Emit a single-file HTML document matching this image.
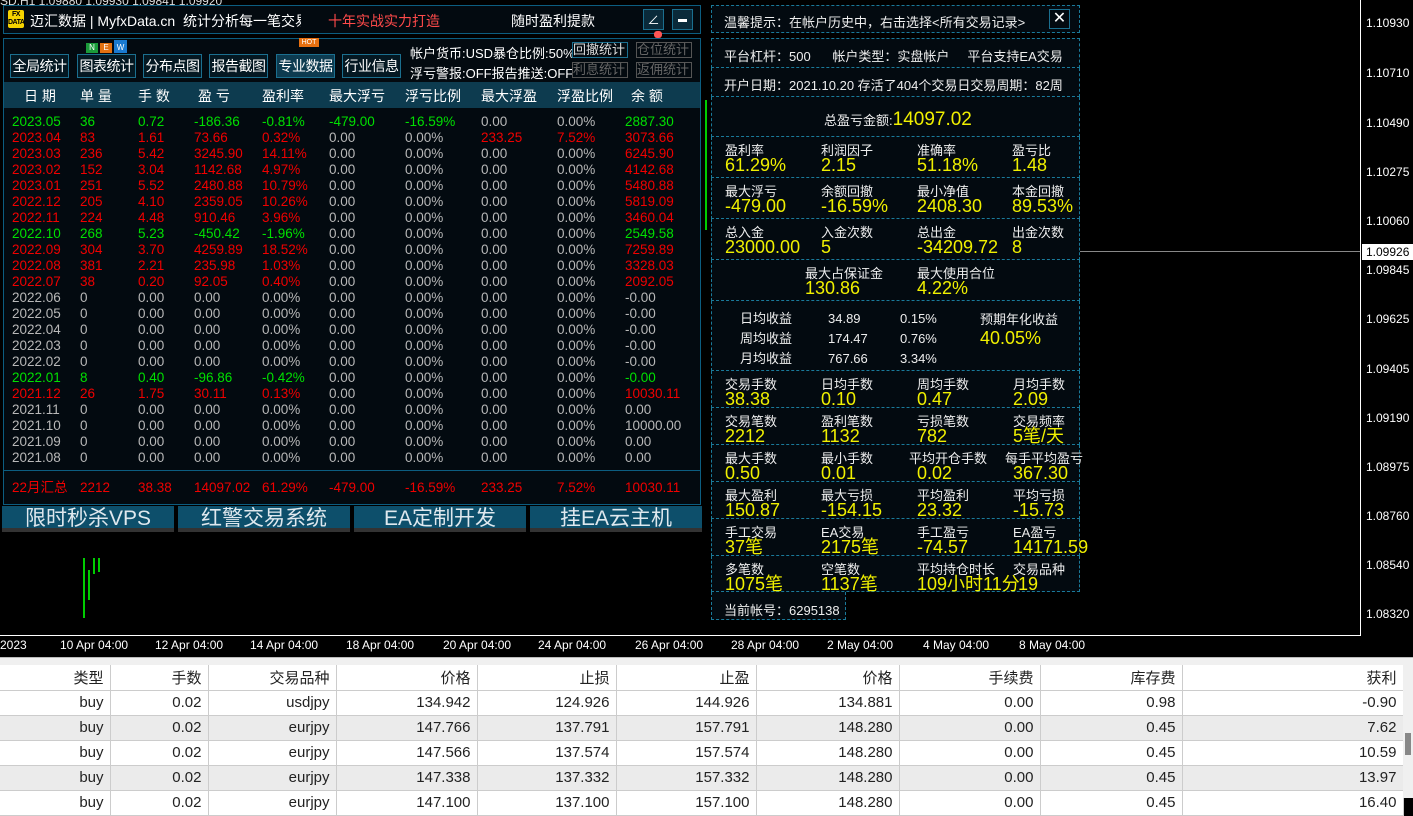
<!DOCTYPE html>
<html><head><meta charset="utf-8"><style>
*{margin:0;padding:0;box-sizing:border-box}
body{width:1413px;height:798px;background:#000;position:relative;overflow:hidden;font-family:"Liberation Sans","Noto Sans CJK SC",sans-serif;color:#ddd}
.a{position:absolute;white-space:nowrap}
.box{position:absolute;border:1px solid #0c5d80;background:#030a10}
.btn{position:absolute;top:54px;height:24px;border:1px solid #1b6f8f;background:#041822;color:#fff;font-size:14px;line-height:22px;text-align:center;white-space:nowrap;overflow:visible;letter-spacing:-0.5px}
table.d{position:absolute;left:12px;border-collapse:collapse;font-size:13.5px;table-layout:fixed}
table.d td{height:16px;line-height:16px;padding:0;white-space:nowrap;overflow:visible}
.g{color:#00e000}.r{color:#f00000}.z{color:#b8b8b8}
.rp{position:absolute;left:711px;width:369px;border:1px dashed #1a7a9a;border-top:none;background:#030a10}
.l{font-size:13px;color:#eee}
.y{color:#f0f000;font-size:18px}
.cell{position:absolute;line-height:15px}
.bb{position:absolute;top:506px;height:26px;background:#0d4f6b;color:#dfe8ee;font-size:21px;line-height:26px;text-align:center;border-bottom:4px solid #333}
.px{position:absolute;left:1366px;font-size:12px;color:#fff}
.tx{position:absolute;top:638px;font-size:12px;color:#fff}
table.b{position:absolute;left:0;top:665px;border-collapse:collapse;font-size:15px;color:#222;table-layout:fixed;background:#fff}
table.b td{height:25px;text-align:right;padding-right:6px;border-right:1px solid #ccc;border-bottom:1px solid #ccc;white-space:nowrap}
table.b tr:nth-child(odd) td{background:#ebebeb}
table.b tr:first-child td{background:#fff}
</style></head><body>

<div class="a" style="left:0;top:-6px;font-size:12px;color:#ddd">SD,H1 1.09880 1.09930 1.09841 1.09920</div>
<div class="a" style="left:1360px;top:0;width:1px;height:636px;background:#fff"></div>
<div class="a" style="left:0;top:635px;width:1361px;height:1px;background:#fff"></div>
<div class="a" style="left:1080px;top:251px;width:280px;height:1px;background:#888"></div>
<div class="px" style="top:16px">1.10930</div>
<div class="px" style="top:66px">1.10710</div>
<div class="px" style="top:116px">1.10490</div>
<div class="px" style="top:165px">1.10275</div>
<div class="px" style="top:214px">1.10060</div>
<div class="a" style="left:1362px;top:244px;width:51px;height:16px;background:#fff;color:#000;font-size:12px;padding-left:4px;line-height:16px">1.09926</div>
<div class="px" style="top:263px">1.09845</div>
<div class="px" style="top:312px">1.09625</div>
<div class="px" style="top:362px">1.09405</div>
<div class="px" style="top:411px">1.09190</div>
<div class="px" style="top:460px">1.08975</div>
<div class="px" style="top:509px">1.08760</div>
<div class="px" style="top:558px">1.08540</div>
<div class="px" style="top:607px">1.08320</div>
<div class="tx" style="left:0">2023</div>
<div class="tx" style="left:60px">10 Apr 04:00</div>
<div class="tx" style="left:155px">12 Apr 04:00</div>
<div class="tx" style="left:250px">14 Apr 04:00</div>
<div class="tx" style="left:346px">18 Apr 04:00</div>
<div class="tx" style="left:443px">20 Apr 04:00</div>
<div class="tx" style="left:538px">24 Apr 04:00</div>
<div class="tx" style="left:635px">26 Apr 04:00</div>
<div class="tx" style="left:731px">28 Apr 04:00</div>
<div class="tx" style="left:827px">2 May 04:00</div>
<div class="tx" style="left:923px">4 May 04:00</div>
<div class="tx" style="left:1019px">8 May 04:00</div>
<div class="a" style="left:83px;top:558px;width:2px;height:60px;background:#0c0"></div>
<div class="a" style="left:88px;top:570px;width:2px;height:30px;background:#0c0"></div>
<div class="a" style="left:93px;top:558px;width:2px;height:16px;background:#0c0"></div>
<div class="a" style="left:98px;top:558px;width:2px;height:14px;background:#0c0"></div>
<div class="a" style="left:705px;top:100px;width:2px;height:130px;background:#0c0"></div>

<!-- header -->
<div class="box" style="left:3px;top:5px;width:698px;height:29px"></div>
<div class="a" style="left:8px;top:10px;width:16px;height:18px;background:#f5d400;color:#000;font-size:7px;font-weight:bold;line-height:8px;text-align:center;padding-top:1px;border-radius:2px;letter-spacing:-0.5px">FX<br>DATA</div>
<div class="a" style="left:30px;top:11px;font-size:14px;color:#fff">迈汇数据 | MyfxData.cn&nbsp; 统计分析每一笔交易</div>
<div class="a" style="left:301px;top:9px;width:24px;height:22px;background:#030a10"></div>
<div class="a" style="left:328px;top:11px;font-size:14px;color:#ff4a4a">十年实战实力打造</div>
<div class="a" style="left:511px;top:11px;font-size:14px;color:#fff">随时盈利提款</div>
<div class="a" style="left:643px;top:9px;width:21px;height:21px;border:1px solid #1b6f8f;background:#0a2a3a;color:#fff;font-size:12px;text-align:center;line-height:20px">∠</div>
<div class="a" style="left:672px;top:9px;width:21px;height:21px;border:1px solid #1b6f8f;background:#0a2a3a"><div style="margin:9px 5px 0;height:3px;background:#fff"></div></div>
<div class="a" style="left:654px;top:31px;width:8px;height:7px;background:#f55;border-radius:3px"></div>

<!-- left panel -->
<div class="box" style="left:3px;top:38px;width:698px;height:467px"></div>
<div class="a" style="left:86px;top:43px;width:12px;height:10px;background:#1a9a3a;font-size:8px;color:#fff;text-align:center">N</div>
<div class="a" style="left:100px;top:43px;width:12px;height:10px;background:#e07010;font-size:8px;color:#fff;text-align:center">E</div>
<div class="a" style="left:114px;top:40px;width:13px;height:13px;background:#1a7ad0;font-size:8px;color:#fff;text-align:center;line-height:16px">W</div>
<div class="a" style="left:299px;top:38px;width:20px;height:9px;background:#e87010;font-size:7px;color:#fff;text-align:center;line-height:9px">HOT</div>
<div class="btn" style="left:10px;width:59px">全局统计</div>
<div class="btn" style="left:77px;width:59px">图表统计</div>
<div class="btn" style="left:143px;width:59px">分布点图</div>
<div class="btn" style="left:209px;width:59px">报告截图</div>
<div class="btn" style="left:276px;width:59px;background:#0d3b50">专业数据</div>
<div class="btn" style="left:342px;width:59px">行业信息</div>
<div class="a" style="left:410px;top:43px;font-size:13px;color:#fff">帐户货币:USD暴仓比例:50%</div>
<div class="a" style="left:410px;top:63px;font-size:13px;color:#fff">浮亏警报:OFF报告推送:OFF</div>
<div class="a" style="left:572px;top:42px;width:56px;height:16px;border:1px solid #1b6f8f;font-size:13px;line-height:14px;color:#ddd;background:#030a10">回撤统计</div>
<div class="a" style="left:636px;top:42px;width:56px;height:16px;border:1px solid #555;font-size:13px;line-height:14px;color:#666">仓位统计</div>
<div class="a" style="left:572px;top:62px;width:56px;height:16px;border:1px solid #555;font-size:13px;line-height:14px;color:#666">利息统计</div>
<div class="a" style="left:636px;top:62px;width:56px;height:16px;border:1px solid #555;font-size:13px;line-height:14px;color:#666">返佣统计</div>
<div class="a" style="left:4px;top:82px;width:696px;height:26px;background:#0d3b4f"></div>
<div class="a" style="left:0;top:86px;font-size:14px;color:#fff;width:700px">
<span class="a" style="left:24px">日 期</span><span class="a" style="left:80px">单 量</span><span class="a" style="left:138px">手 数</span><span class="a" style="left:198px">盈 亏</span><span class="a" style="left:262px">盈利率</span><span class="a" style="left:329px">最大浮亏</span><span class="a" style="left:405px">浮亏比例</span><span class="a" style="left:481px">最大浮盈</span><span class="a" style="left:557px">浮盈比例</span><span class="a" style="left:631px">余 额</span></div>

<table class="d" style="top:114px">
<colgroup><col style="width:68px"><col style="width:58px"><col style="width:56px"><col style="width:68px"><col style="width:67px"><col style="width:76px"><col style="width:76px"><col style="width:76px"><col style="width:68px"><col style="width:75px"></colgroup>
<tr class="g"><td>2023.05</td><td>36</td><td>0.72</td><td>-186.36</td><td>-0.81%</td><td>-479.00</td><td>-16.59%</td><td class="z">0.00</td><td class="z">0.00%</td><td>2887.30</td></tr>
<tr class="r"><td>2023.04</td><td>83</td><td>1.61</td><td>73.66</td><td>0.32%</td><td class="z">0.00</td><td class="z">0.00%</td><td>233.25</td><td>7.52%</td><td>3073.66</td></tr>
<tr class="r"><td>2023.03</td><td>236</td><td>5.42</td><td>3245.90</td><td>14.11%</td><td class="z">0.00</td><td class="z">0.00%</td><td class="z">0.00</td><td class="z">0.00%</td><td>6245.90</td></tr>
<tr class="r"><td>2023.02</td><td>152</td><td>3.04</td><td>1142.68</td><td>4.97%</td><td class="z">0.00</td><td class="z">0.00%</td><td class="z">0.00</td><td class="z">0.00%</td><td>4142.68</td></tr>
<tr class="r"><td>2023.01</td><td>251</td><td>5.52</td><td>2480.88</td><td>10.79%</td><td class="z">0.00</td><td class="z">0.00%</td><td class="z">0.00</td><td class="z">0.00%</td><td>5480.88</td></tr>
<tr class="r"><td>2022.12</td><td>205</td><td>4.10</td><td>2359.05</td><td>10.26%</td><td class="z">0.00</td><td class="z">0.00%</td><td class="z">0.00</td><td class="z">0.00%</td><td>5819.09</td></tr>
<tr class="r"><td>2022.11</td><td>224</td><td>4.48</td><td>910.46</td><td>3.96%</td><td class="z">0.00</td><td class="z">0.00%</td><td class="z">0.00</td><td class="z">0.00%</td><td>3460.04</td></tr>
<tr class="g"><td>2022.10</td><td>268</td><td>5.23</td><td>-450.42</td><td>-1.96%</td><td class="z">0.00</td><td class="z">0.00%</td><td class="z">0.00</td><td class="z">0.00%</td><td>2549.58</td></tr>
<tr class="r"><td>2022.09</td><td>304</td><td>3.70</td><td>4259.89</td><td>18.52%</td><td class="z">0.00</td><td class="z">0.00%</td><td class="z">0.00</td><td class="z">0.00%</td><td>7259.89</td></tr>
<tr class="r"><td>2022.08</td><td>381</td><td>2.21</td><td>235.98</td><td>1.03%</td><td class="z">0.00</td><td class="z">0.00%</td><td class="z">0.00</td><td class="z">0.00%</td><td>3328.03</td></tr>
<tr class="r"><td>2022.07</td><td>38</td><td>0.20</td><td>92.05</td><td>0.40%</td><td class="z">0.00</td><td class="z">0.00%</td><td class="z">0.00</td><td class="z">0.00%</td><td>2092.05</td></tr>
<tr class="z"><td>2022.06</td><td>0</td><td>0.00</td><td>0.00</td><td>0.00%</td><td>0.00</td><td>0.00%</td><td>0.00</td><td>0.00%</td><td>-0.00</td></tr>
<tr class="z"><td>2022.05</td><td>0</td><td>0.00</td><td>0.00</td><td>0.00%</td><td>0.00</td><td>0.00%</td><td>0.00</td><td>0.00%</td><td>-0.00</td></tr>
<tr class="z"><td>2022.04</td><td>0</td><td>0.00</td><td>0.00</td><td>0.00%</td><td>0.00</td><td>0.00%</td><td>0.00</td><td>0.00%</td><td>-0.00</td></tr>
<tr class="z"><td>2022.03</td><td>0</td><td>0.00</td><td>0.00</td><td>0.00%</td><td>0.00</td><td>0.00%</td><td>0.00</td><td>0.00%</td><td>-0.00</td></tr>
<tr class="z"><td>2022.02</td><td>0</td><td>0.00</td><td>0.00</td><td>0.00%</td><td>0.00</td><td>0.00%</td><td>0.00</td><td>0.00%</td><td>-0.00</td></tr>
<tr class="g"><td>2022.01</td><td>8</td><td>0.40</td><td>-96.86</td><td>-0.42%</td><td class="z">0.00</td><td class="z">0.00%</td><td class="z">0.00</td><td class="z">0.00%</td><td>-0.00</td></tr>
<tr class="r"><td>2021.12</td><td>26</td><td>1.75</td><td>30.11</td><td>0.13%</td><td class="z">0.00</td><td class="z">0.00%</td><td class="z">0.00</td><td class="z">0.00%</td><td>10030.11</td></tr>
<tr class="z"><td>2021.11</td><td>0</td><td>0.00</td><td>0.00</td><td>0.00%</td><td>0.00</td><td>0.00%</td><td>0.00</td><td>0.00%</td><td>0.00</td></tr>
<tr class="z"><td>2021.10</td><td>0</td><td>0.00</td><td>0.00</td><td>0.00%</td><td>0.00</td><td>0.00%</td><td>0.00</td><td>0.00%</td><td>10000.00</td></tr>
<tr class="z"><td>2021.09</td><td>0</td><td>0.00</td><td>0.00</td><td>0.00%</td><td>0.00</td><td>0.00%</td><td>0.00</td><td>0.00%</td><td>0.00</td></tr>
<tr class="z"><td>2021.08</td><td>0</td><td>0.00</td><td>0.00</td><td>0.00%</td><td>0.00</td><td>0.00%</td><td>0.00</td><td>0.00%</td><td>0.00</td></tr>
</table>
<div class="a" style="left:3px;top:470px;width:698px;height:1px;background:#0c5d80"></div>
<table class="d" style="top:480px">
<colgroup><col style="width:68px"><col style="width:58px"><col style="width:56px"><col style="width:68px"><col style="width:67px"><col style="width:76px"><col style="width:76px"><col style="width:76px"><col style="width:68px"><col style="width:75px"></colgroup>
<tr class="r"><td>22月汇总</td><td>2212</td><td>38.38</td><td>14097.02</td><td>61.29%</td><td>-479.00</td><td>-16.59%</td><td>233.25</td><td>7.52%</td><td>10030.11</td></tr></table>

<div class="bb" style="left:2px;width:172px">限时秒杀VPS</div>
<div class="bb" style="left:178px;width:172px">红警交易系统</div>
<div class="bb" style="left:354px;width:172px">EA定制开发</div>
<div class="bb" style="left:530px;width:172px">挂EA云主机</div>

<!-- right panel -->
<div class="rp" style="top:5px;height:28px;border-top:1px dashed #1a7a9a"></div>
<div class="a l" style="left:724px;top:12px">温馨提示：在帐户历史中，右击选择&lt;所有交易记录&gt;</div>
<div class="a" style="left:1049px;top:9px;width:21px;height:20px;border:1px solid #1b6f8f;color:#fff;text-align:center;font-size:16px;line-height:18px">✕</div>
<div class="rp" style="top:38px;height:30px;border-top:1px dashed #1a7a9a"></div>
<div class="a l" style="left:724px;top:46px">平台杠杆：500&nbsp;&nbsp;&nbsp;&nbsp;&nbsp; 帐户类型：实盘帐户&nbsp;&nbsp;&nbsp;&nbsp; 平台支持EA交易</div>
<div class="rp" style="top:68px;height:29px"></div>
<div class="a l" style="left:724px;top:75px">开户日期：2021.10.20 存活了404个交易日交易周期：82周</div>
<div class="rp" style="top:97px;height:40px"></div>
<div class="a l" style="left:824px;top:109px">总盈亏金额:<span class="y" style="font-size:19px">14097.02</span></div>

<div class="rp" style="top:137px;height:41px"></div>
<div class="rp" style="top:178px;height:41px"></div>
<div class="rp" style="top:219px;height:41px"></div>
<div class="rp" style="top:260px;height:41px"></div>
<div class="rp" style="top:301px;height:70px"></div>
<div class="rp" style="top:371px;height:37px"></div>
<div class="rp" style="top:408px;height:37px"></div>
<div class="rp" style="top:445px;height:37px"></div>
<div class="rp" style="top:482px;height:37px"></div>
<div class="rp" style="top:519px;height:37px"></div>
<div class="rp" style="top:556px;height:36px"></div>
<div class="rp" style="top:592px;height:28px;width:135px;border-right:1px dashed #1a7a9a"></div>

<div class="cell l" style="left:725px;top:143px">盈利率<br><span class="y">61.29%</span></div>
<div class="cell l" style="left:821px;top:143px">利润因子<br><span class="y">2.15</span></div>
<div class="cell l" style="left:917px;top:143px">准确率<br><span class="y">51.18%</span></div>
<div class="cell l" style="left:1012px;top:143px">盈亏比<br><span class="y">1.48</span></div>
<div class="cell l" style="left:725px;top:184px">最大浮亏<br><span class="y">-479.00</span></div>
<div class="cell l" style="left:821px;top:184px">余额回撤<br><span class="y">-16.59%</span></div>
<div class="cell l" style="left:917px;top:184px">最小净值<br><span class="y">2408.30</span></div>
<div class="cell l" style="left:1012px;top:184px">本金回撤<br><span class="y">89.53%</span></div>
<div class="cell l" style="left:725px;top:225px">总入金<br><span class="y">23000.00</span></div>
<div class="cell l" style="left:821px;top:225px">入金次数<br><span class="y">5</span></div>
<div class="cell l" style="left:917px;top:225px">总出金<br><span class="y">-34209.72</span></div>
<div class="cell l" style="left:1012px;top:225px">出金次数<br><span class="y">8</span></div>
<div class="cell l" style="left:805px;top:266px">最大占保证金<br><span class="y">130.86</span></div>
<div class="cell l" style="left:917px;top:266px">最大使用合位<br><span class="y">4.22%</span></div>

<div class="a l" style="left:740px;top:309px;line-height:20px">日均收益<br>周均收益<br>月均收益</div>
<div class="a l" style="left:828px;top:309px;line-height:20px">34.89<br>174.47<br>767.66</div>
<div class="a l" style="left:900px;top:309px;line-height:20px">0.15%<br>0.76%<br>3.34%</div>
<div class="a l" style="left:980px;top:309px">预期年化收益</div>
<div class="a y" style="left:980px;top:328px">40.05%</div>

<div class="cell l" style="left:725px;top:377px">交易手数<br><span class="y">38.38</span></div>
<div class="cell l" style="left:821px;top:377px">日均手数<br><span class="y">0.10</span></div>
<div class="cell l" style="left:917px;top:377px">周均手数<br><span class="y">0.47</span></div>
<div class="cell l" style="left:1013px;top:377px">月均手数<br><span class="y">2.09</span></div>
<div class="cell l" style="left:725px;top:414px">交易笔数<br><span class="y">2212</span></div>
<div class="cell l" style="left:821px;top:414px">盈利笔数<br><span class="y">1132</span></div>
<div class="cell l" style="left:917px;top:414px">亏损笔数<br><span class="y">782</span></div>
<div class="cell l" style="left:1013px;top:414px">交易频率<br><span class="y">5笔/天</span></div>
<div class="cell l" style="left:725px;top:451px">最大手数<br><span class="y">0.50</span></div>
<div class="cell l" style="left:821px;top:451px">最小手数<br><span class="y">0.01</span></div>
<div class="cell l" style="left:909px;top:451px">平均开仓手数<br><span class="y" style="margin-left:8px">0.02</span></div>
<div class="cell l" style="left:1005px;top:451px">每手平均盈亏<br><span class="y" style="margin-left:8px">367.30</span></div>
<div class="cell l" style="left:725px;top:488px">最大盈利<br><span class="y">150.87</span></div>
<div class="cell l" style="left:821px;top:488px">最大亏损<br><span class="y">-154.15</span></div>
<div class="cell l" style="left:917px;top:488px">平均盈利<br><span class="y">23.32</span></div>
<div class="cell l" style="left:1013px;top:488px">平均亏损<br><span class="y">-15.73</span></div>
<div class="cell l" style="left:725px;top:525px">手工交易<br><span class="y">37笔</span></div>
<div class="cell l" style="left:821px;top:525px">EA交易<br><span class="y">2175笔</span></div>
<div class="cell l" style="left:917px;top:525px">手工盈亏<br><span class="y">-74.57</span></div>
<div class="cell l" style="left:1013px;top:525px">EA盈亏<br><span class="y">14171.59</span></div>
<div class="cell l" style="left:725px;top:562px">多笔数<br><span class="y">1075笔</span></div>
<div class="cell l" style="left:821px;top:562px">空笔数<br><span class="y">1137笔</span></div>
<div class="cell l" style="left:917px;top:562px">平均持仓时长<br><span class="y">109小时11分</span></div>
<div class="cell l" style="left:1013px;top:562px">交易品种<br><span class="y">&nbsp;19</span></div>
<div class="a l" style="left:724px;top:600px">当前帐号：6295138</div>

<!-- bottom table -->
<div class="a" style="left:0;top:657px;width:1413px;height:8px;background:#f0f0f0;border-top:1px solid #bbb"></div>
<table class="b">
<colgroup><col style="width:110px"><col style="width:98px"><col style="width:128px"><col style="width:141px"><col style="width:139px"><col style="width:140px"><col style="width:143px"><col style="width:141px"><col style="width:142px"><col style="width:221px"></colgroup>
<tr><td>类型</td><td>手数</td><td>交易品种</td><td>价格</td><td>止损</td><td>止盈</td><td>价格</td><td>手续费</td><td>库存费</td><td>获利</td></tr>
<tr><td>buy</td><td>0.02</td><td>usdjpy</td><td>134.942</td><td>124.926</td><td>144.926</td><td>134.881</td><td>0.00</td><td>0.98</td><td>-0.90</td></tr>
<tr><td>buy</td><td>0.02</td><td>eurjpy</td><td>147.766</td><td>137.791</td><td>157.791</td><td>148.280</td><td>0.00</td><td>0.45</td><td>7.62</td></tr>
<tr><td>buy</td><td>0.02</td><td>eurjpy</td><td>147.566</td><td>137.574</td><td>157.574</td><td>148.280</td><td>0.00</td><td>0.45</td><td>10.59</td></tr>
<tr><td>buy</td><td>0.02</td><td>eurjpy</td><td>147.338</td><td>137.332</td><td>157.332</td><td>148.280</td><td>0.00</td><td>0.45</td><td>13.97</td></tr>
<tr><td>buy</td><td>0.02</td><td>eurjpy</td><td>147.100</td><td>137.100</td><td>157.100</td><td>148.280</td><td>0.00</td><td>0.45</td><td>16.40</td></tr>
</table>
<div class="a" style="left:1403px;top:665px;width:10px;height:133px;background:#f0f0f0"></div>
<div class="a" style="left:1405px;top:733px;width:6px;height:22px;background:#888"></div>
</body></html>
